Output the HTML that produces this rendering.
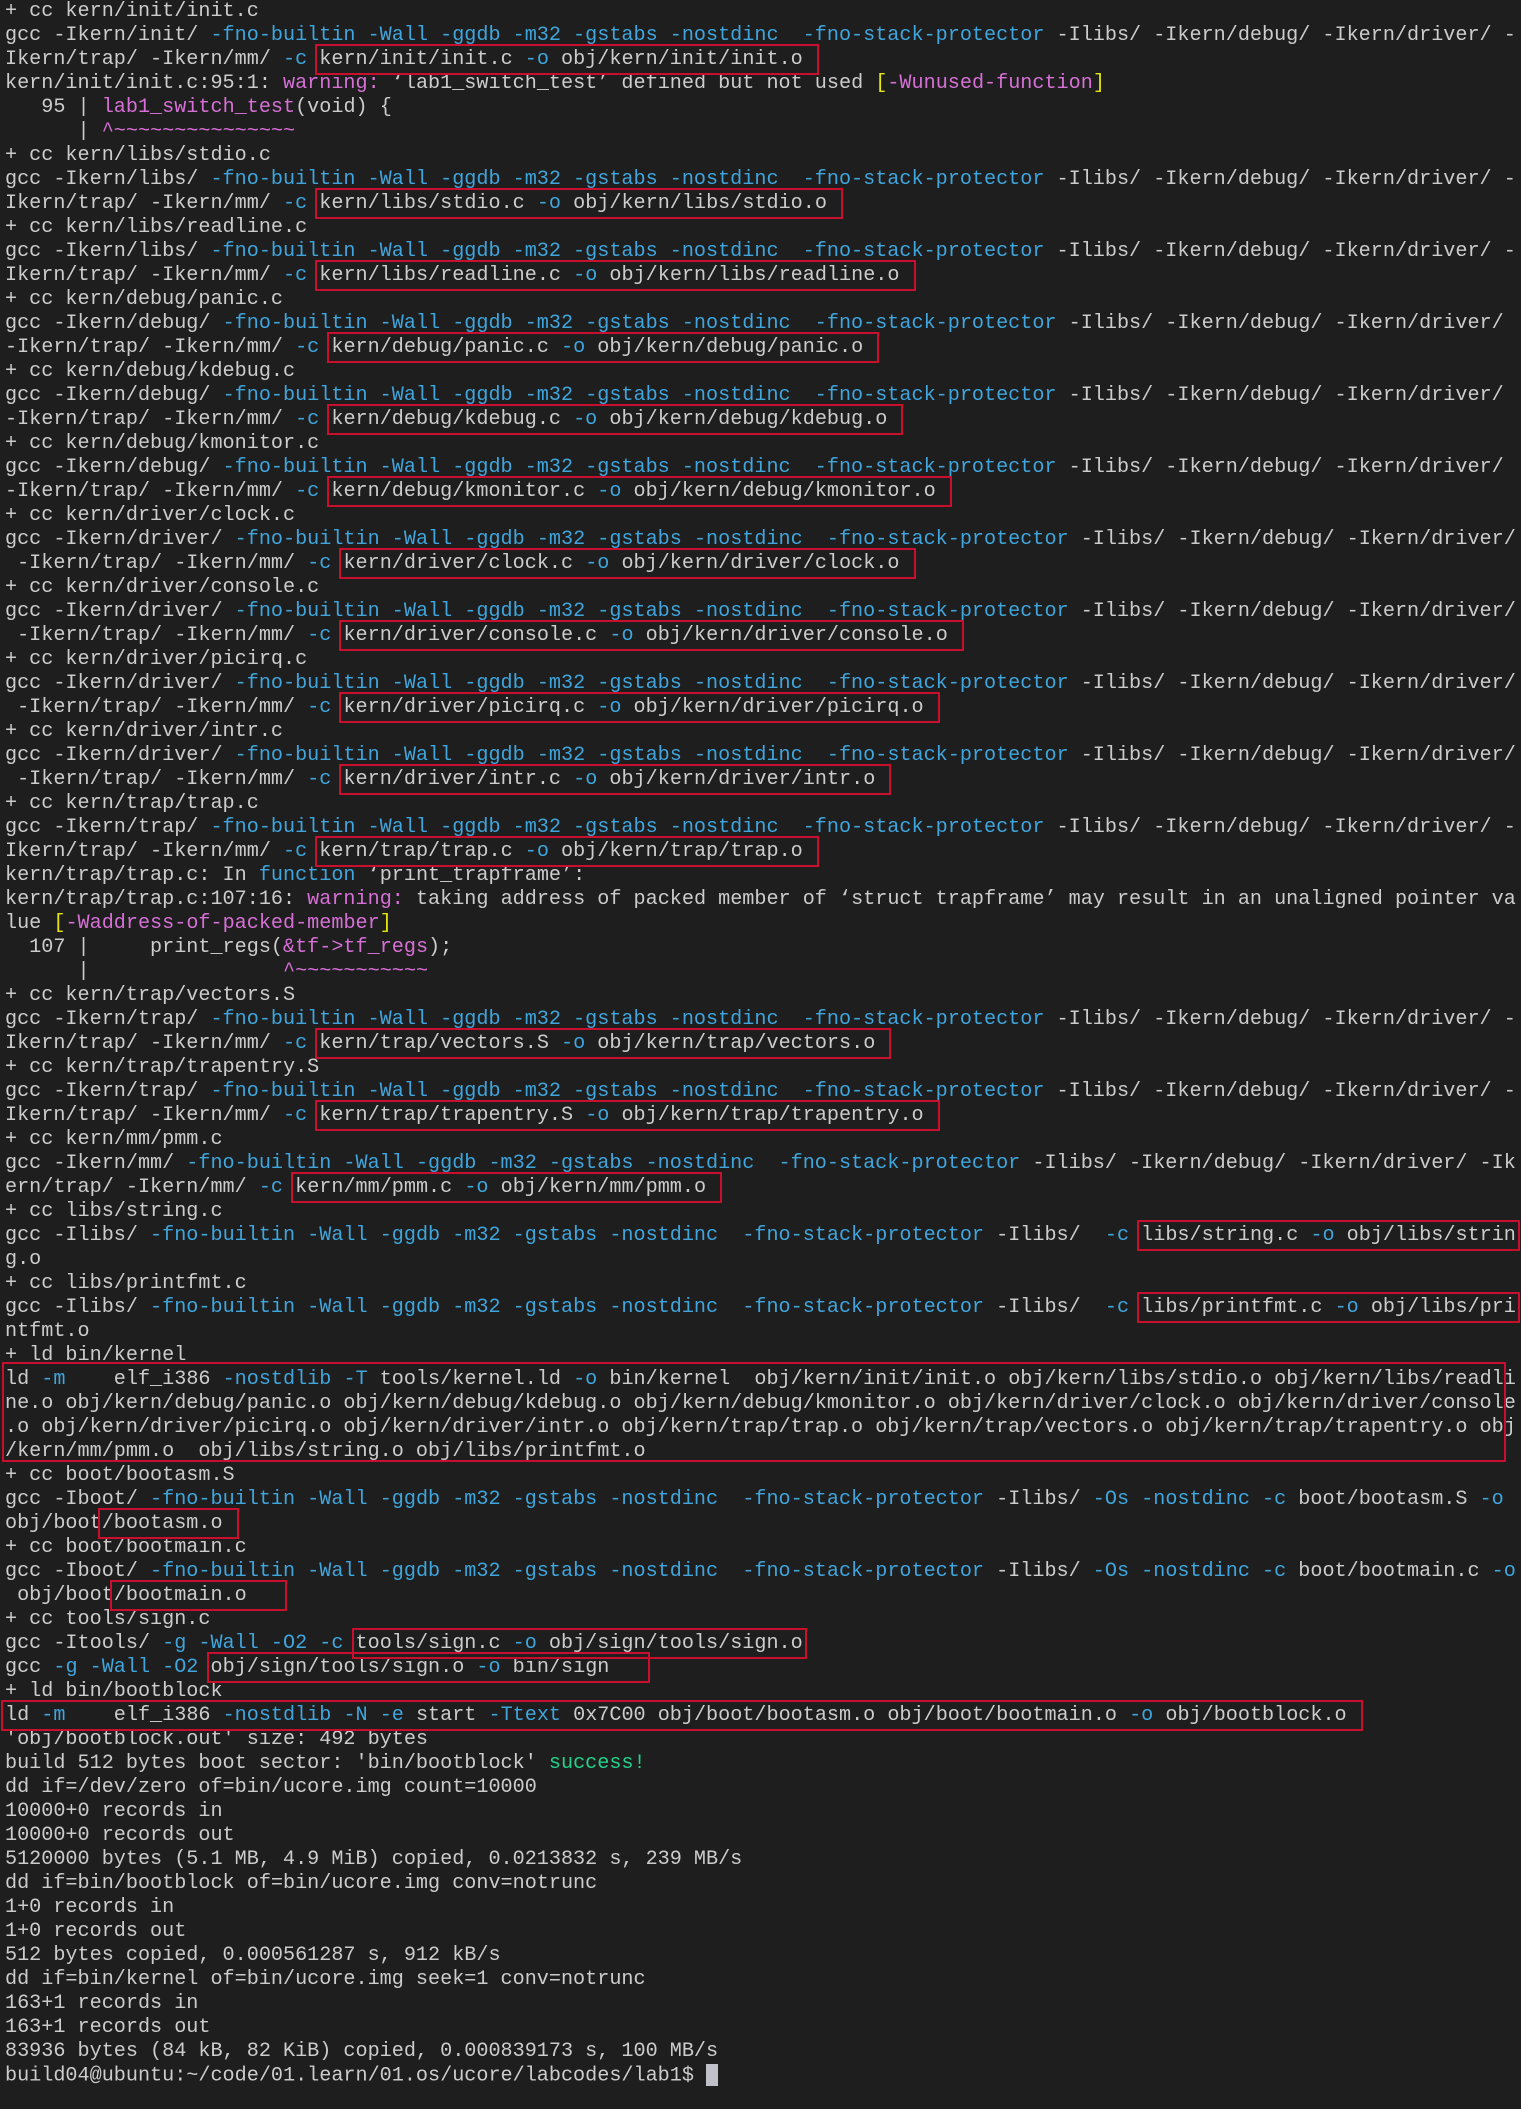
<!DOCTYPE html>
<html><head><meta charset="utf-8"><style>
html,body{margin:0;padding:0;background:#1e1e1e;}
body{width:1521px;height:2109px;overflow:hidden;position:relative;font-family:"Liberation Mono",monospace;font-size:20.15px;color:#cccccc;}
.l{height:24px;line-height:24px;white-space:pre;padding-left:5px;}
.b{color:#3fa5dc}.m{color:#d670d6}.g{color:#23d18b}.y{color:#e5e510}
.x{outline:2px solid #c8102e;outline-offset:2px;}
.bx{position:absolute;border:2px solid #c8102e;}
.cur{display:inline-block;width:12px;height:22px;background:#c0c0c8;vertical-align:middle;}
</style></head><body>
<div class="l">+ cc kern/init/init.c</div>
<div class="l">gcc -Ikern/init/ <span class="b">-fno-builtin -Wall -ggdb -m32 -gstabs -nostdinc  -fno-stack-protector</span> -Ilibs/ -Ikern/debug/ -Ikern/driver/ -</div>
<div class="l">Ikern/trap/ -Ikern/mm/ <span class="b">-c</span> <span class="x">kern/init/init.c <span class="b">-o</span> obj/kern/init/init.o </span></div>
<div class="l">kern/init/init.c:95:1: <span class="m">warning:</span> ‘lab1_switch_test’ defined but not used <span class="y">[</span><span class="m">-Wunused-function</span><span class="y">]</span></div>
<div class="l">   95 | <span class="m">lab1_switch_test</span>(void) {</div>
<div class="l">      | <span class="m">^~~~~~~~~~~~~~~~</span></div>
<div class="l">+ cc kern/libs/stdio.c</div>
<div class="l">gcc -Ikern/libs/ <span class="b">-fno-builtin -Wall -ggdb -m32 -gstabs -nostdinc  -fno-stack-protector</span> -Ilibs/ -Ikern/debug/ -Ikern/driver/ -</div>
<div class="l">Ikern/trap/ -Ikern/mm/ <span class="b">-c</span> <span class="x">kern/libs/stdio.c <span class="b">-o</span> obj/kern/libs/stdio.o </span></div>
<div class="l">+ cc kern/libs/readline.c</div>
<div class="l">gcc -Ikern/libs/ <span class="b">-fno-builtin -Wall -ggdb -m32 -gstabs -nostdinc  -fno-stack-protector</span> -Ilibs/ -Ikern/debug/ -Ikern/driver/ -</div>
<div class="l">Ikern/trap/ -Ikern/mm/ <span class="b">-c</span> <span class="x">kern/libs/readline.c <span class="b">-o</span> obj/kern/libs/readline.o </span></div>
<div class="l">+ cc kern/debug/panic.c</div>
<div class="l">gcc -Ikern/debug/ <span class="b">-fno-builtin -Wall -ggdb -m32 -gstabs -nostdinc  -fno-stack-protector</span> -Ilibs/ -Ikern/debug/ -Ikern/driver/</div>
<div class="l">-Ikern/trap/ -Ikern/mm/ <span class="b">-c</span> <span class="x">kern/debug/panic.c <span class="b">-o</span> obj/kern/debug/panic.o </span></div>
<div class="l">+ cc kern/debug/kdebug.c</div>
<div class="l">gcc -Ikern/debug/ <span class="b">-fno-builtin -Wall -ggdb -m32 -gstabs -nostdinc  -fno-stack-protector</span> -Ilibs/ -Ikern/debug/ -Ikern/driver/</div>
<div class="l">-Ikern/trap/ -Ikern/mm/ <span class="b">-c</span> <span class="x">kern/debug/kdebug.c <span class="b">-o</span> obj/kern/debug/kdebug.o </span></div>
<div class="l">+ cc kern/debug/kmonitor.c</div>
<div class="l">gcc -Ikern/debug/ <span class="b">-fno-builtin -Wall -ggdb -m32 -gstabs -nostdinc  -fno-stack-protector</span> -Ilibs/ -Ikern/debug/ -Ikern/driver/</div>
<div class="l">-Ikern/trap/ -Ikern/mm/ <span class="b">-c</span> <span class="x">kern/debug/kmonitor.c <span class="b">-o</span> obj/kern/debug/kmonitor.o </span></div>
<div class="l">+ cc kern/driver/clock.c</div>
<div class="l">gcc -Ikern/driver/ <span class="b">-fno-builtin -Wall -ggdb -m32 -gstabs -nostdinc  -fno-stack-protector</span> -Ilibs/ -Ikern/debug/ -Ikern/driver/</div>
<div class="l"> -Ikern/trap/ -Ikern/mm/ <span class="b">-c</span> <span class="x">kern/driver/clock.c <span class="b">-o</span> obj/kern/driver/clock.o </span></div>
<div class="l">+ cc kern/driver/console.c</div>
<div class="l">gcc -Ikern/driver/ <span class="b">-fno-builtin -Wall -ggdb -m32 -gstabs -nostdinc  -fno-stack-protector</span> -Ilibs/ -Ikern/debug/ -Ikern/driver/</div>
<div class="l"> -Ikern/trap/ -Ikern/mm/ <span class="b">-c</span> <span class="x">kern/driver/console.c <span class="b">-o</span> obj/kern/driver/console.o </span></div>
<div class="l">+ cc kern/driver/picirq.c</div>
<div class="l">gcc -Ikern/driver/ <span class="b">-fno-builtin -Wall -ggdb -m32 -gstabs -nostdinc  -fno-stack-protector</span> -Ilibs/ -Ikern/debug/ -Ikern/driver/</div>
<div class="l"> -Ikern/trap/ -Ikern/mm/ <span class="b">-c</span> <span class="x">kern/driver/picirq.c <span class="b">-o</span> obj/kern/driver/picirq.o </span></div>
<div class="l">+ cc kern/driver/intr.c</div>
<div class="l">gcc -Ikern/driver/ <span class="b">-fno-builtin -Wall -ggdb -m32 -gstabs -nostdinc  -fno-stack-protector</span> -Ilibs/ -Ikern/debug/ -Ikern/driver/</div>
<div class="l"> -Ikern/trap/ -Ikern/mm/ <span class="b">-c</span> <span class="x">kern/driver/intr.c <span class="b">-o</span> obj/kern/driver/intr.o </span></div>
<div class="l">+ cc kern/trap/trap.c</div>
<div class="l">gcc -Ikern/trap/ <span class="b">-fno-builtin -Wall -ggdb -m32 -gstabs -nostdinc  -fno-stack-protector</span> -Ilibs/ -Ikern/debug/ -Ikern/driver/ -</div>
<div class="l">Ikern/trap/ -Ikern/mm/ <span class="b">-c</span> <span class="x">kern/trap/trap.c <span class="b">-o</span> obj/kern/trap/trap.o </span></div>
<div class="l">kern/trap/trap.c: In <span class="b">function</span> ‘print_trapframe’:</div>
<div class="l">kern/trap/trap.c:107:16: <span class="m">warning:</span> taking address of packed member of ‘struct trapframe’ may result in an unaligned pointer va</div>
<div class="l">lue <span class="y">[</span><span class="m">-Waddress-of-packed-member</span><span class="y">]</span></div>
<div class="l">  107 |     print_regs(<span class="m">&amp;tf-&gt;tf_regs</span>);</div>
<div class="l">      |                <span class="m">^~~~~~~~~~~~</span></div>
<div class="l">+ cc kern/trap/vectors.S</div>
<div class="l">gcc -Ikern/trap/ <span class="b">-fno-builtin -Wall -ggdb -m32 -gstabs -nostdinc  -fno-stack-protector</span> -Ilibs/ -Ikern/debug/ -Ikern/driver/ -</div>
<div class="l">Ikern/trap/ -Ikern/mm/ <span class="b">-c</span> <span class="x">kern/trap/vectors.S <span class="b">-o</span> obj/kern/trap/vectors.o </span></div>
<div class="l">+ cc kern/trap/trapentry.S</div>
<div class="l">gcc -Ikern/trap/ <span class="b">-fno-builtin -Wall -ggdb -m32 -gstabs -nostdinc  -fno-stack-protector</span> -Ilibs/ -Ikern/debug/ -Ikern/driver/ -</div>
<div class="l">Ikern/trap/ -Ikern/mm/ <span class="b">-c</span> <span class="x">kern/trap/trapentry.S <span class="b">-o</span> obj/kern/trap/trapentry.o </span></div>
<div class="l">+ cc kern/mm/pmm.c</div>
<div class="l">gcc -Ikern/mm/ <span class="b">-fno-builtin -Wall -ggdb -m32 -gstabs -nostdinc  -fno-stack-protector</span> -Ilibs/ -Ikern/debug/ -Ikern/driver/ -Ik</div>
<div class="l">ern/trap/ -Ikern/mm/ <span class="b">-c</span> <span class="x">kern/mm/pmm.c <span class="b">-o</span> obj/kern/mm/pmm.o </span></div>
<div class="l">+ cc libs/string.c</div>
<div class="l">gcc -Ilibs/ <span class="b">-fno-builtin -Wall -ggdb -m32 -gstabs -nostdinc  -fno-stack-protector</span> -Ilibs/  <span class="b">-c</span> <span class="x">libs/string.c <span class="b">-o</span> obj/libs/strin</span></div>
<div class="l">g.o</div>
<div class="l">+ cc libs/printfmt.c</div>
<div class="l">gcc -Ilibs/ <span class="b">-fno-builtin -Wall -ggdb -m32 -gstabs -nostdinc  -fno-stack-protector</span> -Ilibs/  <span class="b">-c</span> <span class="x">libs/printfmt.c <span class="b">-o</span> obj/libs/pri</span></div>
<div class="l">ntfmt.o</div>
<div class="l">+ ld bin/kernel</div>
<div class="l">ld <span class="b">-m</span>    elf_i386 <span class="b">-nostdlib -T</span> tools/kernel.ld <span class="b">-o</span> bin/kernel  obj/kern/init/init.o obj/kern/libs/stdio.o obj/kern/libs/readli</div>
<div class="l">ne.o obj/kern/debug/panic.o obj/kern/debug/kdebug.o obj/kern/debug/kmonitor.o obj/kern/driver/clock.o obj/kern/driver/console</div>
<div class="l">.o obj/kern/driver/picirq.o obj/kern/driver/intr.o obj/kern/trap/trap.o obj/kern/trap/vectors.o obj/kern/trap/trapentry.o obj</div>
<div class="l">/kern/mm/pmm.o  obj/libs/string.o obj/libs/printfmt.o</div>
<div class="l">+ cc boot/bootasm.S</div>
<div class="l">gcc -Iboot/ <span class="b">-fno-builtin -Wall -ggdb -m32 -gstabs -nostdinc  -fno-stack-protector</span> -Ilibs/ <span class="b">-Os -nostdinc -c</span> boot/bootasm.S <span class="b">-o</span></div>
<div class="l">obj/boot<span class="x">/bootasm.o </span></div>
<div class="l">+ cc boot/bootmain.c</div>
<div class="l">gcc -Iboot/ <span class="b">-fno-builtin -Wall -ggdb -m32 -gstabs -nostdinc  -fno-stack-protector</span> -Ilibs/ <span class="b">-Os -nostdinc -c</span> boot/bootmain.c <span class="b">-o</span></div>
<div class="l"> obj/boot<span class="x">/bootmain.o   </span></div>
<div class="l">+ cc tools/sign.c</div>
<div class="l">gcc -Itools/ <span class="b">-g -Wall -O2 -c</span> <span class="x">tools/sign.c <span class="b">-o</span> obj/sign/tools/sign.o</span></div>
<div class="l">gcc <span class="b">-g -Wall -O2</span> <span class="x">obj/sign/tools/sign.o <span class="b">-o</span> bin/sign   </span></div>
<div class="l">+ ld bin/bootblock</div>
<div class="l"><span class="x">ld <span class="b">-m</span>    elf_i386 <span class="b">-nostdlib -N -e</span> start <span class="b">-Ttext</span> 0x7C00 obj/boot/bootasm.o obj/boot/bootmain.o <span class="b">-o</span> obj/bootblock.o </span></div>
<div class="l">'obj/bootblock.out' size: 492 bytes</div>
<div class="l">build 512 bytes boot sector: 'bin/bootblock' <span class="g">success!</span></div>
<div class="l">dd if=/dev/zero of=bin/ucore.img count=10000</div>
<div class="l">10000+0 records in</div>
<div class="l">10000+0 records out</div>
<div class="l">5120000 bytes (5.1 MB, 4.9 MiB) copied, 0.0213832 s, 239 MB/s</div>
<div class="l">dd if=bin/bootblock of=bin/ucore.img conv=notrunc</div>
<div class="l">1+0 records in</div>
<div class="l">1+0 records out</div>
<div class="l">512 bytes copied, 0.000561287 s, 912 kB/s</div>
<div class="l">dd if=bin/kernel of=bin/ucore.img seek=1 conv=notrunc</div>
<div class="l">163+1 records in</div>
<div class="l">163+1 records out</div>
<div class="l">83936 bytes (84 kB, 82 KiB) copied, 0.000839173 s, 100 MB/s</div>
<div class="l">build04@ubuntu:~/code/01.learn/01.os/ucore/labcodes/lab1$ <span class="cur"></span></div>
<div class="bx" style="left:2px;top:1362px;width:1500px;height:96px;"></div>
</body></html>
